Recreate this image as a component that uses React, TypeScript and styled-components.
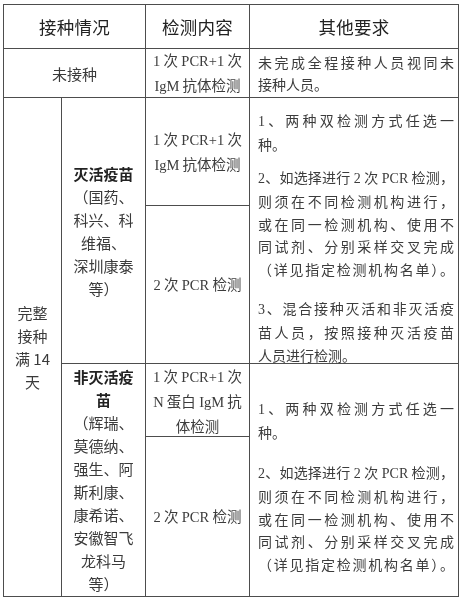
import React from "react";
import styled, { createGlobalStyle } from "styled-components";

const GlobalStyle = createGlobalStyle`
  html, body { margin: 0; padding: 0; background: #fff; }
  body {
    font-family: "Noto Sans CJK SC", sans-serif;
    color: #333;
  }
`;

const Table = styled.div`
  display: grid;
  grid-template-columns: 57px 83px 103px 208px;
  grid-template-rows: 43px 48px 107px 157px 72px 159px;
  gap: 1px;
  padding: 1px;
  background: #4d4d4d;
  width: max-content;
  margin: 4px 0 0 3px;
  filter: grayscale(1);
`;

const Cell = styled.div<{ $col: string; $row: string }>`
  grid-column: ${(p) => p.$col};
  grid-row: ${(p) => p.$row};
  background: #fff;
  display: flex;
  flex-direction: column;
  justify-content: center;
  align-items: center;
  min-width: 0;
  box-sizing: border-box;
`;

const HeadCell = styled(Cell)`
  font-family: "Noto Sans CJK SC", sans-serif;
  font-size: 17.5px;
  color: #222;
  letter-spacing: 0.2px;
`;

const GroupCell = styled(Cell)`
  font-family: "Noto Sans CJK SC", sans-serif;
  font-size: 15px;
  line-height: 23px;
  color: #333;
  text-align: center;
`;

const GroupLine = styled.span<{ $bold?: boolean }>`
  display: block;
  white-space: nowrap;
  font-weight: ${(p) => (p.$bold ? 700 : 400)};
  color: ${(p) => (p.$bold ? "#222" : "#3a3a3a")};
`;

const TestCell = styled(Cell)`
  font-family: "Noto Sans CJK SC", sans-serif;
  font-size: 14.5px;
  line-height: 23px;
  color: #3c3c3c;
  text-align: center;
`;

const TestLine = styled.span`
  display: block;
  white-space: nowrap;
`;

const Latin = styled.span`
  font-family: "Liberation Serif", serif;
`;

const NoteCell = styled(Cell)<{ $padTop: number }>`
  align-items: stretch;
  padding: ${(p) => p.$padTop}px 4px 0 8px;
  font-family: "Noto Sans CJK SC", sans-serif;
  font-size: 14px;
  line-height: 22.5px;
  color: #3c3c3c;
`;

const Para = styled.div<{ $gap: number }>`
  margin-top: ${(p) => p.$gap}px;
`;

const NoteLine = styled.span<{ $full: boolean }>`
  display: block;
  text-align: ${(p) => (p.$full ? "justify" : "left")};
  text-align-last: ${(p) => (p.$full ? "justify" : "left")};
`;

// Split a string into runs: ASCII (Latin, rendered in a serif face) and the rest (CJK).
const Mixed: React.FC<{ text: string }> = ({ text }) => {
  const parts = text.match(/[\x21-\x7e]+|[^\x21-\x7e]+/g) || [];
  return (
    <>
      {parts.map((p, i) =>
        /^[\x21-\x7e]+$/.test(p) ? <Latin key={i}>{p}</Latin> : <React.Fragment key={i}>{p}</React.Fragment>
      )}
    </>
  );
};

type ParaData = { gap: number; lines: string[]; lastFull?: boolean };

const Note: React.FC<{ col: string; row: string; padTop: number; paras: ParaData[] }> = ({
  col,
  row,
  padTop,
  paras,
}) => (
  <NoteCell $col={col} $row={row} $padTop={padTop}>
    {paras.map((p, i) => (
      <Para key={i} $gap={p.gap}>
        {p.lines.map((l, j) => (
          <NoteLine key={j} $full={j < p.lines.length - 1 || !!p.lastFull}>
            <Mixed text={l} />
          </NoteLine>
        ))}
      </Para>
    ))}
  </NoteCell>
);

const para1 = ["1、两种双检测方式任选一", "种。"];
const para2 = [
  "2、如选择进行 2 次 PCR 检测，",
  "则须在不同检测机构进行，",
  "或在同一检测机构、使用不",
  "同试剂、分别采样交叉完成",
  "（详见指定检测机构名单）。",
];
const para3 = ["3、混合接种灭活和非灭活疫", "苗人员，按照接种灭活疫苗", "人员进行检测。"];

const Group: React.FC<{ col: string; row: string; bold: string[]; lines: string[] }> = ({
  col,
  row,
  bold,
  lines,
}) => (
  <GroupCell $col={col} $row={row}>
    {bold.map((b, i) => (
      <GroupLine key={"b" + i} $bold>
        {b}
      </GroupLine>
    ))}
    {lines.map((l, i) => (
      <GroupLine key={i}>{l}</GroupLine>
    ))}
  </GroupCell>
);

const Test: React.FC<{ col: string; row: string; lines: string[] }> = ({ col, row, lines }) => (
  <TestCell $col={col} $row={row}>
    {lines.map((l, i) => (
      <TestLine key={i}>
        <Mixed text={l} />
      </TestLine>
    ))}
  </TestCell>
);

export default function App() {
  return (
    <>
      <GlobalStyle />
      <Table lang="zh-CN">
        <HeadCell $col="1 / 3" $row="1">接种情况</HeadCell>
        <HeadCell $col="3" $row="1">检测内容</HeadCell>
        <HeadCell $col="4" $row="1">其他要求</HeadCell>

        <Group col="1 / 3" row="2" bold={[]} lines={["未接种"]} />
        <Test col="3" row="2" lines={["1 次 PCR+1 次", "IgM 抗体检测"]} />
        <Note
          col="4"
          row="2"
          padTop={0}
          paras={[{ gap: 0, lines: ["未完成全程接种人员视同未", "接种人员。"] }]}
        />

        <Group col="1" row="3 / 7" bold={[]} lines={["完整", "接种", "满 14", "天"]} />

        <Group
          col="2"
          row="3 / 5"
          bold={["灭活疫苗"]}
          lines={["（国药、", "科兴、科", "维福、", "深圳康泰", "等）"]}
        />
        <Test col="3" row="3" lines={["1 次 PCR+1 次", "IgM 抗体检测"]} />
        <Test col="3" row="4" lines={["2 次 PCR 检测"]} />
        <Note
          col="4"
          row="3 / 5"
          padTop={14}
          paras={[
            { gap: 0, lines: para1 },
            { gap: 10, lines: para2, lastFull: true },
            { gap: 16.5, lines: para3 },
          ]}
        />

        <Group
          col="2"
          row="5 / 7"
          bold={["非灭活疫", "苗"]}
          lines={["（辉瑞、", "莫德纳、", "强生、阿", "斯利康、", "康希诺、", "安徽智飞", "龙科马", "等）"]}
        />
        <Test col="3" row="5" lines={["1 次 PCR+1 次", "N 蛋白 IgM 抗", "体检测"]} />
        <Test col="3" row="6" lines={["2 次 PCR 检测"]} />
        <Note
          col="4"
          row="5 / 7"
          padTop={12}
          paras={[
            { gap: 0, lines: para1 },
            { gap: 17, lines: para2, lastFull: true },
          ]}
        />
      </Table>
    </>
  );
}
